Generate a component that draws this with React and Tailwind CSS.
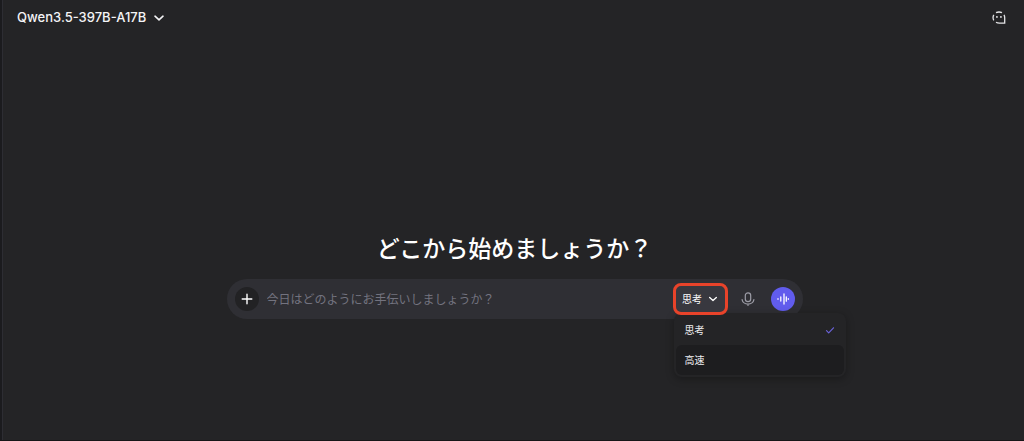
import { useState } from "react";

const MODES = ["思考", "高速"];

function ChevronDown({ className }) {
  return (
    <svg viewBox="0 0 12 12" className={className} fill="none" stroke="currentColor" strokeWidth="1.6" strokeLinecap="round" strokeLinejoin="round" aria-hidden="true">
      <path d="M2 4.2 6 7.8l4-3.6" />
    </svg>
  );
}

function TemporaryChatIcon() {
  return (
    <svg viewBox="0 0 14 14" className="size-3.5" fill="none" stroke="currentColor" strokeWidth="1.3" aria-hidden="true">
      <path d="M4 1.7Q7 0.3 10 1.7" />
      <path d="M1.8 3.9Q0.3 6.6 1.8 9.4" />
      <path d="M4 11.3Q5.4 12.2 7.4 12.2H12.7V6.8Q12.7 5.2 12 3.9" />
      <circle cx="4.9" cy="5.9" r="0.95" fill="currentColor" stroke="none" />
      <circle cx="8.9" cy="5.9" r="0.95" fill="currentColor" stroke="none" />
    </svg>
  );
}

function MicIcon() {
  return (
    <svg viewBox="0 0 14 14" className="size-3.5" fill="none" stroke="currentColor" strokeWidth="1.2" strokeLinecap="round" aria-hidden="true">
      <rect x="4.3" y="0.8" width="5.4" height="8.8" rx="2.7" />
      <path d="M1.1 7.6a5.95 5.3 0 0 0 11.8 0" />
      <path d="M7 12.9v0.5" />
    </svg>
  );
}

function WaveIcon() {
  return (
    <svg viewBox="0 0 12 12" className="size-3" fill="none" stroke="currentColor" strokeWidth="1.3" strokeLinecap="round" aria-hidden="true">
      <path d="M1 5.7v0.6M3.8 4v4M7 1v10M9.3 3.8v4.4M11.3 5.7v0.6" />
    </svg>
  );
}

function ModeMenu({ mode, onSelect }) {
  return (
    <div role="menu" className="absolute left-px top-full z-10 -mt-0.5 w-[172px] rounded-lg bg-[#242426] p-0.5 shadow-[0_2px_8px_rgba(0,0,0,0.3)]">
      {MODES.map((item) => (
        <button
          key={item}
          type="button"
          role="menuitemradio"
          aria-checked={item === mode}
          onClick={() => onSelect(item)}
          className={
            item === mode
              ? "flex h-[30px] w-full items-center justify-between rounded-md px-[9px] text-[10px] text-[#f0f0f2]"
              : "flex h-[30px] w-full items-center justify-between rounded-md bg-[#1d1d1f] px-[9px] text-[10px] text-[#f0f0f2]"
          }
        >
          {item}
          {item === mode && (
            <svg viewBox="0 0 10 10" className="size-2.5" fill="none" stroke="#6a62d8" strokeWidth="1.2" strokeLinecap="round" strokeLinejoin="round" aria-hidden="true">
              <path d="m1.5 5.6 2.2 2.2 4.8-5" />
            </svg>
          )}
        </button>
      ))}
    </div>
  );
}

export default function App() {
  const [mode, setMode] = useState("思考");
  const [open, setOpen] = useState(true);

  return (
    <div className="flex min-h-screen border-b border-[#161618] bg-[#242426] font-['Inter','Noto_Sans_CJK_JP',sans-serif] text-[#f5f5f7]">
      <div className="w-[3px] shrink-0 border-r border-[#2d2d33] bg-[#1b1b1e]" />
      <div className="flex min-w-0 flex-1 flex-col">
        <header className="flex h-[35px] items-center justify-between pl-3.5 pr-[18px]">
          <button type="button" className="flex items-center gap-[7px] text-[13px] font-medium text-[#f4f4f6]">
            Qwen3.5-397B-A17B
            <ChevronDown className="size-3" />
          </button>
          <button type="button" aria-label="一時チャット" className="text-[#e4e4e6]">
            <TemporaryChatIcon />
          </button>
        </header>

        <main className="flex flex-1 flex-col items-center pl-0.5 pt-[196px]">
          <h1 className="text-[23px] font-medium leading-9 text-white">どこから始めましょうか？</h1>
          <form onSubmit={(e) => e.preventDefault()} className="mt-3 flex h-10 w-full max-w-[576px] items-center rounded-full bg-[#2f2f34] pl-2 pr-2">
            <button type="button" aria-label="追加" className="flex size-6 shrink-0 items-center justify-center rounded-full bg-[#222224] text-white">
              <svg viewBox="0 0 12 12" className="size-3" fill="none" stroke="currentColor" strokeWidth="1.4" strokeLinecap="round" aria-hidden="true">
                <path d="M6 1.2v9.6M1.2 6h9.6" />
              </svg>
            </button>
            <input
              type="text"
              aria-label="メッセージ"
              placeholder="今日はどのようにお手伝いしましょうか？"
              className="ml-2 h-8 min-w-0 flex-1 bg-transparent text-xs text-white outline-none placeholder:text-[#73737f]"
            />
            <div className="relative">
              <button
                type="button"
                aria-haspopup="menu"
                aria-expanded={open}
                onClick={() => setOpen(!open)}
                className="relative z-20 flex h-8 w-[55px] items-center justify-center gap-1.5 rounded-lg border-3 border-[#e8432a] bg-[#38383f] text-[10px] text-white"
              >
                {mode}
                <ChevronDown className="size-2.5" />
              </button>
              {open && <ModeMenu mode={mode} onSelect={setMode} />}
            </div>
            <button type="button" aria-label="音声入力" className="ml-2 flex size-6 shrink-0 items-center justify-center text-[#9c9ca6]">
              <MicIcon />
            </button>
            <button type="button" aria-label="音声チャット" className="ml-[11px] flex size-6 shrink-0 items-center justify-center rounded-full bg-[#615ced] text-white">
              <WaveIcon />
            </button>
          </form>
        </main>
      </div>
    </div>
  );
}
